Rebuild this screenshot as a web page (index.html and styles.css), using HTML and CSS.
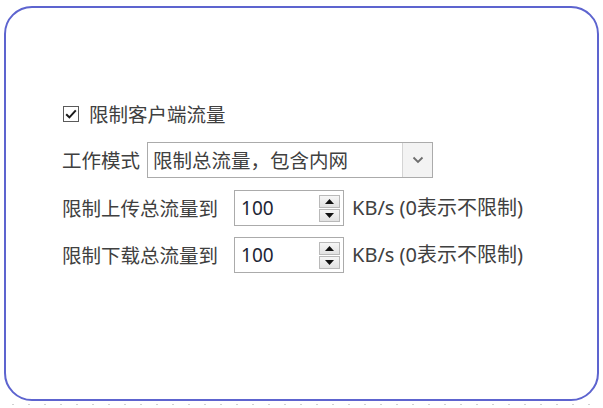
FILE: index.html
```html
<!DOCTYPE html>
<html lang="zh-CN">
<head>
<meta charset="utf-8">
<link rel="stylesheet" href="styles.css">
</head>
<body>
<div class="frame">
  <div class="row row-check">
    <span class="checkbox">
      <svg width="14" height="14" viewBox="0 0 14 14"><path d="M2.2 7.2 L5.4 10.4 L11.8 3.4" fill="none" stroke="#1a1a1a" stroke-width="2"/></svg>
    </span>
    <span class="text">限制客户端流量</span>
  </div>
  <div class="row row-mode">
    <span class="text label-mode">工作模式</span>
    <div class="combo">
      <span class="combo-text">限制总流量，包含内网</span>
      <span class="combo-btn">
        <svg width="12" height="8" viewBox="0 0 12 8"><path d="M1.5 1.5 L6 6 L10.5 1.5" fill="none" stroke="#6d6d6d" stroke-width="1.8"/></svg>
      </span>
    </div>
  </div>
  <div class="row row-spin first">
    <span class="text label-spin">限制上传总流量到</span>
    <div class="spin">
      <span class="spin-val">100</span>
      <span class="spin-btns">
        <span class="sbtn"><svg width="9" height="5" viewBox="0 0 9 5"><path d="M0 5 L4.5 0 L9 5 Z" fill="#111"/></svg></span>
        <span class="sbtn"><svg width="9" height="5" viewBox="0 0 9 5"><path d="M0 0 L4.5 5 L9 0 Z" fill="#111"/></svg></span>
      </span>
    </div>
    <span class="text unit">KB/s (0表示不限制)</span>
  </div>
  <div class="row row-spin second">
    <span class="text label-spin">限制下载总流量到</span>
    <div class="spin">
      <span class="spin-val">100</span>
      <span class="spin-btns">
        <span class="sbtn"><svg width="9" height="5" viewBox="0 0 9 5"><path d="M0 5 L4.5 0 L9 5 Z" fill="#111"/></svg></span>
        <span class="sbtn"><svg width="9" height="5" viewBox="0 0 9 5"><path d="M0 0 L4.5 5 L9 0 Z" fill="#111"/></svg></span>
      </span>
    </div>
    <span class="text unit">KB/s (0表示不限制)</span>
  </div>
</div>
<div class="dots"></div>
</body>
</html>
```
FILE: styles.css
```css
html, body {
  margin: 0;
  padding: 0;
  background: #ffffff;
}
body {
  width: 603px;
  height: 408px;
  overflow: hidden;
  font-family: "Noto Sans CJK SC", "Noto Sans", sans-serif;
  color: #404040;
}
.frame {
  box-sizing: border-box;
  margin: 6px 0 0 4px;
  width: 595px;
  height: 395px;
  border: 2px solid #5d64cf;
  border-radius: 28px;
  padding: 96px 0 0 56px;
  display: flex;
  flex-direction: column;
}
.row {
  display: flex;
  align-items: center;
}
.text {
  font-size: 19.5px;
  line-height: 20px;
  white-space: nowrap;
}
.row-check {
  height: 20px;
}
.checkbox {
  box-sizing: border-box;
  width: 16px;
  height: 16px;
  margin-left: 1px;
  border: 1px solid #5a5a5a;
  background: #fff;
  display: flex;
  align-items: center;
  justify-content: center;
  margin-right: 10px;
}
.row-mode {
  margin-top: 18px;
  height: 36px;
}
.label-mode {
  margin-right: 7px;
}
.combo {
  box-sizing: border-box;
  width: 286px;
  height: 36px;
  border: 1px solid #ababab;
  background: #fff;
  display: flex;
  align-items: stretch;
}
.combo-text {
  flex: 1;
  font-size: 19.5px;
  line-height: 34px;
  padding-left: 5px;
  color: #404040;
  white-space: nowrap;
}
.combo-btn {
  width: 29px;
  border-left: 1px solid #d4d4d4;
  background: #f3f3f3;
  display: flex;
  align-items: center;
  justify-content: center;
}
.row-spin {
  height: 36px;
}
.row-spin.first {
  margin-top: 12px;
}
.row-spin.second {
  margin-top: 11px;
}
.label-spin {
  margin-right: 16px;
}
.spin {
  box-sizing: border-box;
  width: 110px;
  height: 36px;
  border: 1px solid #ababab;
  background: #fff;
  display: flex;
  align-items: center;
  justify-content: space-between;
  padding: 0 3px 0 6px;
}
.spin-val {
  font-family: "Noto Sans", "Noto Sans CJK SC", sans-serif;
  font-size: 19px;
  color: #1d2535;
}
.spin-btns {
  display: flex;
  flex-direction: column;
  gap: 1px;
}
.sbtn {
  box-sizing: border-box;
  width: 21px;
  height: 13px;
  border: 1px solid #b9b9b9;
  background: linear-gradient(#f6f6f6, #e2e2e2);
  display: flex;
  align-items: center;
  justify-content: center;
}
.unit {
  margin-left: 8px;
  font-family: "Noto Sans", "Noto Sans CJK SC", sans-serif;
  font-size: 20px;
}
.dots {
  height: 1px;
  margin: 3px 0 0 5px;
  width: 590px;
  background-image: radial-gradient(circle, #d0d0d0 0.7px, transparent 1px);
  background-size: 16px 2px;
}
```
